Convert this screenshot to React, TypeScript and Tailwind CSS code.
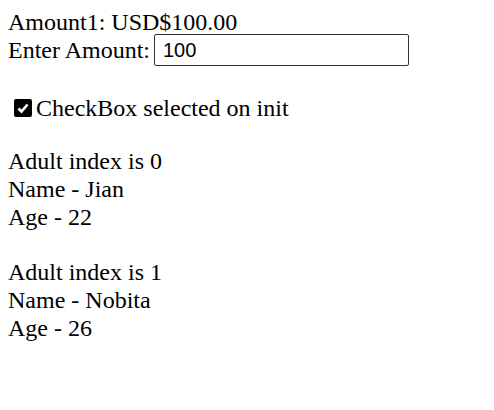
import React from "react";

export default function App() {
  return (
    <div className="min-h-[410px] bg-white p-2 text-black text-[24px] leading-[28px]" style={{ fontFamily: '"Liberation Serif", "Times New Roman", serif' }}>
      <div>Amount1: USD$100.00</div>
      <div className="flex items-center h-[28px]">
        <span>Enter Amount:</span>
        <input
          readOnly
          value="100"
          className="ml-[4px] w-[255px] h-[32px] border border-[#333] rounded-[2px] px-[8px] text-[20px] outline-none"
          style={{ fontFamily: '"Liberation Sans", Arial, sans-serif' }}
        />
      </div>
      <div className="h-[30px]" />
      <div className="flex items-center pl-[6px]">
        <span className="w-[18px] h-[18px] bg-black rounded-[2px] flex items-center justify-center mr-[4px]">
          <svg width="14" height="14" viewBox="0 0 14 14">
            <path d="M2.5 7.5 L5.5 10.5 L11.5 3.5" stroke="white" strokeWidth="2.6" fill="none" />
          </svg>
        </span>
        <span>CheckBox selected on init</span>
      </div>
      <div className="h-[25px]" />
      <div>Adult index is 0</div>
      <div>Name - Jian</div>
      <div>Age - 22</div>
      <div className="h-[27px]" />
      <div>Adult index is 1</div>
      <div>Name - Nobita</div>
      <div>Age - 26</div>
    </div>
  );
}
